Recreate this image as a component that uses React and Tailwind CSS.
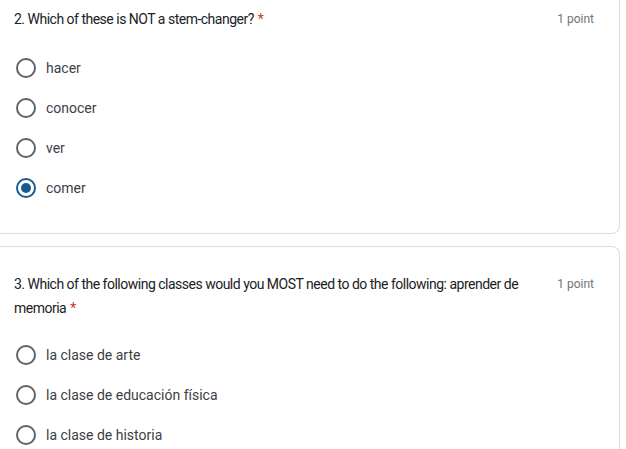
import React from "react";

const q2 = ["hacer", "conocer", "ver", "comer"];
const q3 = ["la clase de arte", "la clase de educación física", "la clase de historia"];

function Radio({ checked }) {
  if (checked) {
    return (
      <span className="w-5 h-5 rounded-full border-2 border-[#1b5a8e] flex items-center justify-center shrink-0">
        <span className="w-[10px] h-[10px] rounded-full bg-[#1b5a8e]" />
      </span>
    );
  }
  return <span className="w-5 h-5 rounded-full border-2 border-[#5f6368] shrink-0" />;
}

function Option({ label, checked }) {
  return (
    <div className="flex items-center h-10">
      <div className="w-[50px] flex justify-center pl-[1px]">
        <Radio checked={checked} />
      </div>
      <span className="text-[14px] text-[#3c4043] -ml-[4px]" style={{ fontFamily: "Roboto, sans-serif" }}>
        {label}
      </span>
    </div>
  );
}

function Title({ children }) {
  return (
    <div
      className="text-[14px] leading-6 text-[#202124] tracking-[-0.5px] whitespace-nowrap"
      style={{ fontFamily: "Roboto, sans-serif" }}
    >
      {children}
      <span className="text-[#d93025] ml-1">*</span>
    </div>
  );
}

function Points() {
  return (
    <span className="text-[12px] text-[#70757a] shrink-0 pt-[3px]" style={{ fontFamily: "Roboto, sans-serif" }}>
      1 point
    </span>
  );
}

export default function App() {
  return (
    <div className="w-[626px] h-[449px] overflow-hidden bg-white">
      <div className="w-[620px] h-[234px] border-r border-b border-[#dadce0] rounded-br-lg pt-[7px]">
        <div className="flex justify-between pl-[14px] pr-[25px]">
          <Title>2. Which of these is NOT a stem-changer?</Title>
          <Points />
        </div>
        <div className="mt-[17px]">
          {q2.map((o) => (
            <Option key={o} label={o} checked={o === "comer"} />
          ))}
        </div>
      </div>
      <div className="w-[620px] h-[300px] mt-3 border-r border-t border-[#dadce0] rounded-tr-lg pt-[25px]">
        <div className="flex justify-between pl-[14px] pr-[25px]">
          <Title>
            3. Which of the following classes would you MOST need to do the following: aprender de
            <br />
            memoria
          </Title>
          <Points />
        </div>
        <div className="mt-[15px]">
          {q3.map((o) => (
            <Option key={o} label={o} />
          ))}
        </div>
      </div>
    </div>
  );
}
